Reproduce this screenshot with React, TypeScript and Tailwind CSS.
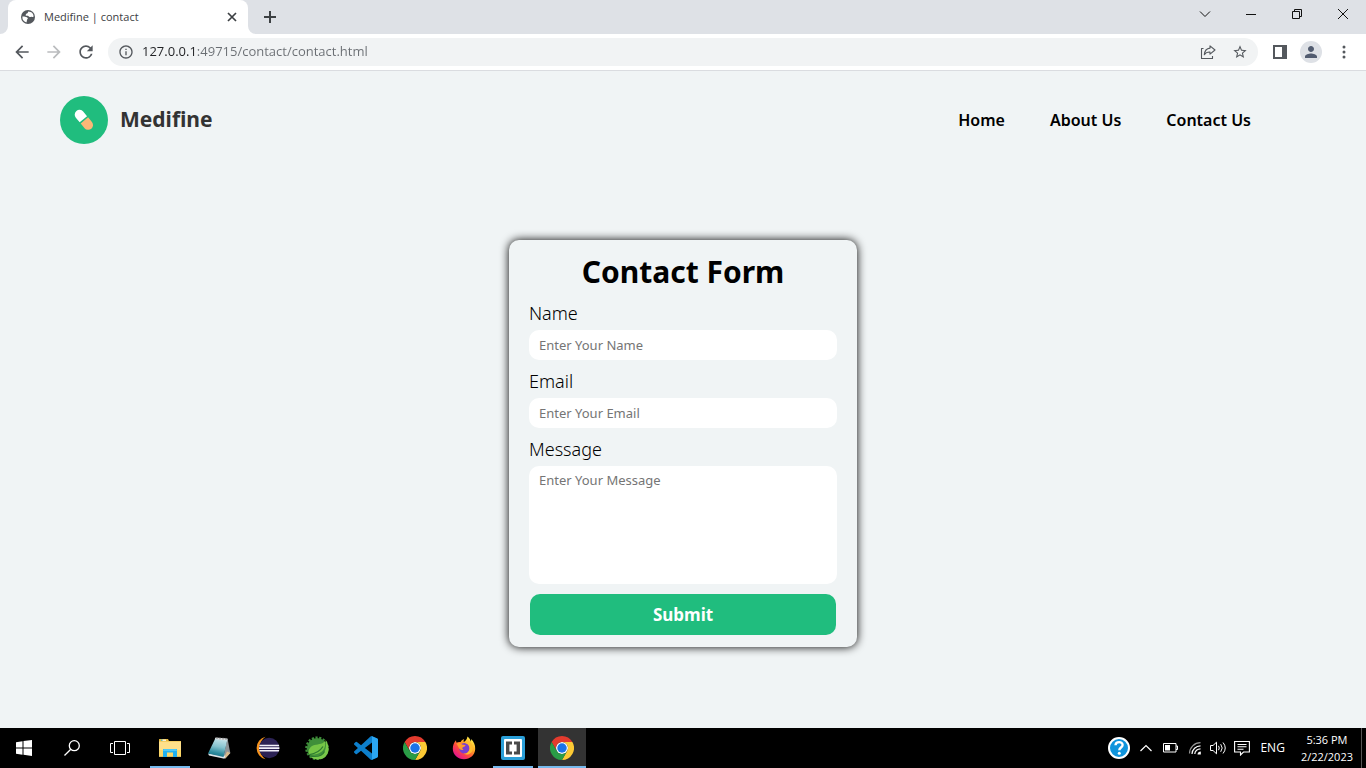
import React from "react";
import { MdArrowBack, MdArrowForward, MdRefresh, MdInfoOutline, MdStarBorder, MdPerson } from "react-icons/md";

/* ---------- Browser window ---------- */

function GlobeIcon() {
  return (
    <svg width="16" height="16" viewBox="0 0 16 16" aria-hidden="true">
      <circle cx="8" cy="8" r="7" fill="#54585d" />
      <path
        d="M8.300 2.500c-.6 1-.3 1.700-1.500 2-.9.3-.6 1.200-1.400 1.500.2 1 1.400.7 2.300.7 1.200.1 1 1.200 2 1.400.8 0 1.500-.7 2.300-.2.700.3 1.300 0 1.700-.3A5.600 5.600 0 0 0 8.300 2.500z"
        fill="#fff"
      />
      <path
        d="M2.400 7.600c1 0 2.600.2 3.600.3 1.500.2 1.900 1 1.800 1.700-.1.600-.8.800-.8 1.500 0 .9-.3 1.700-.6 2.300A5.600 5.600 0 0 1 2.400 7.600z"
        fill="#fff"
      />
    </svg>
  );
}

function WindowButton({ label, children }: { label: string; children: React.ReactNode }) {
  return (
    <button type="button" aria-label={label} className="flex h-7 w-[46px] items-center justify-center">
      <svg width="12" height="12" viewBox="0 0 12 12" fill="none" stroke="#111" strokeWidth="1" aria-hidden="true">
        {children}
      </svg>
    </button>
  );
}

function TabStrip() {
  return (
    <div className="flex h-[34px] items-start bg-[#dee1e6]">
      <div className="flex h-[34px] items-end">
        <svg width="8" height="8" viewBox="0 0 8 8" aria-hidden="true">
          <path d="M8 0v8H0a8 8 0 0 0 8-8z" fill="#fff" />
        </svg>
        <div className="flex h-full w-60 items-center rounded-t-lg bg-white pr-2 pl-3">
          <GlobeIcon />
          <span className="ml-2 flex-1 text-[11px] text-[#3c4043]">Medifine | contact</span>
          <button type="button" aria-label="Close tab" className="flex size-4 items-center justify-center">
            <svg width="10" height="10" viewBox="0 0 10 10" stroke="#3c4043" strokeWidth="1.700" aria-hidden="true">
              <path d="M1 1l8 8M9 1l-8 8" />
            </svg>
          </button>
        </div>
        <svg width="8" height="8" viewBox="0 0 8 8" aria-hidden="true">
          <path d="M0 0v8h8a8 8 0 0 1-8-8z" fill="#fff" />
        </svg>
      </div>
      <button type="button" aria-label="New tab" className="flex h-[34px] w-7 items-center justify-center">
        <svg width="12" height="12" viewBox="0 0 12 12" stroke="#3c4043" strokeWidth="2" aria-hidden="true">
          <path d="M6 0v12M0 6h12" />
        </svg>
      </button>
      <div className="ml-auto flex">
        <WindowButton label="Search tabs">
          <path d="M1 3.500l5 5 5-5" />
        </WindowButton>
        <WindowButton label="Minimize">
          <path d="M1 6.500h10" />
        </WindowButton>
        <WindowButton label="Restore">
          <path d="M1.500 3.500h7v7h-7zM3.500 3.500v-2h7v7h-2" />
        </WindowButton>
        <WindowButton label="Close">
          <path d="M1 1l10 10M11 1L1 11" />
        </WindowButton>
      </div>
    </div>
  );
}

function Toolbar() {
  return (
    <div className="flex h-[37px] items-center border-b border-[#dadce0] bg-white pr-3 pl-3">
      <div className="flex gap-3">
        <button type="button" aria-label="Back" className="size-5 text-[#54585d]">
          <MdArrowBack className="size-5" />
        </button>
        <button type="button" aria-label="Forward" className="size-5 text-[#babcbe]">
          <MdArrowForward className="size-5" />
        </button>
        <button type="button" aria-label="Reload" className="size-5 text-[#54585d]">
          <MdRefresh className="size-5" />
        </button>
      </div>
      <div className="ml-3 flex h-7 flex-1 items-center rounded-full bg-[#f1f3f4] pr-2.5 pl-2.5">
        <MdInfoOutline className="size-4 text-[#54585d]" aria-hidden="true" />
        <input
          aria-label="Address"
          defaultValue="127.0.0.1:49715/contact/contact.html"
          className="ml-2 flex-1 bg-[linear-gradient(to_right,#202124_55px,#6a6e73_55px)] bg-clip-text text-[13px] text-transparent outline-none"
        />
        <div className="flex gap-4">
          <button type="button" aria-label="Share" className="size-4">
            <svg
              width="16"
              height="16"
              viewBox="0 0 16 16"
              fill="none"
              stroke="#54585d"
              strokeWidth="1.100"
              strokeLinejoin="round"
              aria-hidden="true"
            >
              <path d="M3.500 4.500H1.500v10h11v-2.500" />
              <path d="M10 1.800l5 4.200-5 4.200V8C7.500 7.900 5.600 8.700 4.300 10.700 4.600 7.200 6.600 4.500 10 4.100z" />
            </svg>
          </button>
          <button type="button" aria-label="Bookmark" className="size-4 text-[#54585d]">
            <MdStarBorder className="size-4" />
          </button>
        </div>
      </div>
      <div className="ml-3.5 flex items-center gap-3">
        <button type="button" aria-label="Side panel" className="flex size-4 items-center justify-center">
          <svg width="14" height="14" viewBox="0 0 14 14" aria-hidden="true">
            <path d="M0 0h14v14H0z" fill="#54585d" />
            <path d="M2 2h7v10H2z" fill="#fff" />
          </svg>
        </button>
        <button
          type="button"
          aria-label="Profile"
          className="flex size-[22px] items-center justify-center rounded-full bg-[#dee1e6] text-[#525c70]"
        >
          <MdPerson className="size-[18px]" />
        </button>
        <button type="button" aria-label="Menu" className="flex h-4 w-5 items-center justify-center">
          <svg width="4" height="14" viewBox="0 0 4 14" fill="#54585d" aria-hidden="true">
            <circle cx="2" cy="2" r="1.500" />
            <circle cx="2" cy="7" r="1.500" />
            <circle cx="2" cy="12" r="1.500" />
          </svg>
        </button>
      </div>
    </div>
  );
}

/* ---------- Web page ---------- */

function Logo() {
  return (
    <a href="#home" className="flex items-center gap-3">
      <svg width="48" height="48" viewBox="0 0 48 48" aria-hidden="true">
        <circle cx="24" cy="24" r="24" fill="#20bd7e" />
        <g transform="translate(24 24) rotate(-40)">
          <path d="M-4.800-1v-6a4.800 4.800 0 0 1 9.600 0v6z" fill="#fff" />
          <path d="M-4.800 .600v6a4.800 4.800 0 0 0 9.600 0v-6z" fill="#fdb777" />
        </g>
      </svg>
      <span className="text-[21px] font-bold text-[#333]">Medifine</span>
    </a>
  );
}

const links = ["Home", "About Us", "Contact Us"];

function Header() {
  return (
    <header className="flex items-center justify-between pt-[25px] pr-[115px] pl-[60px]">
      <Logo />
      <nav className="flex gap-[45px] text-base font-semibold text-black">
        {links.map((link) => (
          <a key={link} href="#top">
            {link}
          </a>
        ))}
      </nav>
    </header>
  );
}

const labelClass = "mb-1.5 block text-lg leading-[22px] font-light text-black";
const fieldClass =
  "block w-full rounded-[10px] bg-white px-2.5 text-[13px] text-black outline-none placeholder:text-[#757575]";

function ContactForm() {
  return (
    <form
      onSubmit={(e) => e.preventDefault()}
      className="mx-auto mt-24 w-full max-w-[348px] rounded-[10px] bg-[#f0f4f5] px-5 pt-3 pb-3 shadow-[0_0_10px_#000]"
    >
      <h1 className="mb-2.5 text-center text-3xl leading-10 font-bold text-black">Contact Form</h1>
      <label htmlFor="name" className={labelClass}>
        Name
      </label>
      <input id="name" type="text" placeholder="Enter Your Name" className={`${fieldClass} mb-2.5 h-[30px]`} />
      <label htmlFor="email" className={labelClass}>
        Email
      </label>
      <input id="email" type="email" placeholder="Enter Your Email" className={`${fieldClass} mb-2.5 h-[30px]`} />
      <label htmlFor="message" className={labelClass}>
        Message
      </label>
      <textarea
        id="message"
        placeholder="Enter Your Message"
        className={`${fieldClass} mb-2.5 h-[118px] resize-none py-[5px] leading-[18px]`}
      />
      <div className="px-px">
        <button type="submit" className="h-[41px] w-full rounded-[10px] bg-[#20bd7e] text-[17px] font-bold text-white">
          Submit
        </button>
      </div>
    </form>
  );
}

/* ---------- Taskbar icons ---------- */

function ChromeIcon() {
  return (
    <svg width="24" height="24" viewBox="0 0 48 48" aria-hidden="true">
      <circle cx="24" cy="24" r="12" fill="#fff" />
      <path
        d="M24,12H44.7812a23.9939,23.9939,0,0,0-41.5639.0029L13.6079,30l.0093-.0024A11.9852,11.9852,0,0,1,24,12Z"
        fill="#e33b2e"
      />
      <path
        d="M34.3913,30.0029,24.0007,48A23.994,23.994,0,0,0,44.78,12.0031H23.9989l-.0025.0093A11.985,11.985,0,0,1,34.3913,30.0029Z"
        fill="#fcc934"
      />
      <path
        d="M13.6086,30.0031,3.218,12.006A23.994,23.994,0,0,0,24.0025,48L34.3931,30.0029l-.0067-.0068a11.9852,11.9852,0,0,1-20.7778.007Z"
        fill="#2a9c46"
      />
      <circle cx="24" cy="24" r="9.500" fill="#1a73e8" />
    </svg>
  );
}

function ExplorerIcon() {
  return (
    <svg width="22" height="20" viewBox="0 0 22 20" aria-hidden="true">
      <path d="M0 1.500Q0 1 .500 1H9l1 2h12v15.500H0z" fill="#e9b93b" />
      <path d="M2 1.600h5v1.200H2z" fill="#fff" />
      <path d="M2 1.600h1.500v1.200H2z" fill="#35a9a0" />
      <path d="M0 3.500h22v15H0z" fill="#ffe08a" />
      <path d="M0 12h22v6.500H0z" fill="#fbd666" />
      <path d="M4 11h14v8h-4v-4.500H8V19H4z" fill="#1fb0ee" />
      <path d="M4.500 11h13l.5 2H4z" fill="#4cc8f6" />
    </svg>
  );
}

function NotepadIcon() {
  return (
    <svg width="24" height="24" viewBox="0 0 24 24" aria-hidden="true">
      <defs>
        <linearGradient id="pad" x1=".6" y1="0" x2=".4" y2="1">
          <stop offset="0" stopColor="#c9e6ec" />
          <stop offset=".45" stopColor="#86c3cf" />
          <stop offset=".8" stopColor="#2b8a9c" />
          <stop offset="1" stopColor="#1c6e84" />
        </linearGradient>
      </defs>
      <path d="M20.500 2.500L23.300 17l-5 5.500-2-2z" fill="#8e9498" />
      <path d="M17 21.500l3-6 3.300 1.500-5 5.500z" fill="#d9b98a" />
      <path d="M1 17.500l1 2 15.500 3.200 1-3z" fill="#dfe5e8" />
      <path d="M8.500 2L20.500 3 16.500 21 1 17.500z" fill="url(#pad)" />
      <path d="M8.500 1.500L20.500 2.600l-.4 1.800L7.800 3.200z" fill="#d9dcde" />
      <path d="M10 1v2M13 1.300v2M16 1.600v2M19 1.900v2" stroke="#777" strokeWidth=".8" />
    </svg>
  );
}

function EclipseIcon() {
  return (
    <svg width="24" height="24" viewBox="0 0 24 24" aria-hidden="true">
      <path d="M9.500 .8A11.500 11.500 0 0 0 9.500 23.200 13.500 13.500 0 0 1 9.500 .8z" fill="#f7941e" />
      <circle cx="13.200" cy="12" r="10.200" fill="#2c2255" />
      <path d="M3.600 8.700h19.300l.4 1.500H3.200zM3 11.200h20.400v1.700H3zM3.200 14h20.100l-.5 1.500H3.700z" fill="#f2f0fa" />
    </svg>
  );
}

function SpringIcon() {
  return (
    <svg width="24" height="24" viewBox="0 0 24 24" aria-hidden="true">
      <circle cx="12" cy="12.300" r="10.200" fill="#3f8f3a" />
      <circle cx="12" cy="12.300" r="10.800" fill="none" stroke="#3f8f3a" strokeWidth="2" strokeDasharray="2.200 1.570" />
      <path d="M20.500 3.500c4.500 7 4 14.500-1 18-5 3.500-12.500 2-15-2 4 .5 11 .8 14-2.500 2.600-3 3-8.500 2-13.500z" fill="#79c94a" />
      <path d="M20 5C17 9 12 7.800 8 9.600c-4 1.900-5.300 6-3.600 8.900 7 .5 13-1.500 15-6.500 1-2.500 1-5 .6-7z" fill="#75c546" />
      <path d="M4.500 18.700c6-1 10.500-3.500 13.500-8.200M5 20c6 1 12 .5 14.500-4.500" fill="none" stroke="#2d7b31" strokeWidth="1.300" />
    </svg>
  );
}

function VsCodeIcon() {
  return (
    <svg width="24" height="24" viewBox="0 0 24 24" aria-hidden="true">
      <path
        d="M23.150 2.587L18.210.210a1.494 1.494 0 0 0-1.705.290l-9.460 8.630-4.120-3.128a.999.999 0 0 0-1.276.057L.327 7.261A1 1 0 0 0 .326 8.740L3.899 12 .326 15.260a1 1 0 0 0 .001 1.479L1.650 17.940a.999.999 0 0 0 1.276.057l4.120-3.128 9.460 8.630a1.492 1.492 0 0 0 1.704.290l4.942-2.377A1.500 1.500 0 0 0 24 20.060V3.939a1.500 1.500 0 0 0-.850-1.352zm-5.146 14.861L10.826 12l7.178-5.448v10.896z"
        fill="#0d7fcc"
      />
      <path d="M18 .200l5.200 2.400q.8.500.8 1.300v16.200q0 .8-.8 1.300L18 23.800z" fill="#2ba6f2" />
    </svg>
  );
}

function FirefoxIcon() {
  return (
    <svg width="24" height="24" viewBox="0 0 24 24" aria-hidden="true">
      <defs>
        <linearGradient id="fox" x1=".85" y1=".1" x2=".2" y2=".9">
          <stop offset="0" stopColor="#fff04a" />
          <stop offset=".35" stopColor="#ffa524" />
          <stop offset=".65" stopColor="#ff4b3c" />
          <stop offset="1" stopColor="#e3158c" />
        </linearGradient>
      </defs>
      <path
        d="M15.500 .5c2 1.500 3 3.500 3.200 5 .5-.5.500-1.500.300-2.500 2.800 2.500 4.400 6 4.200 10C22.900 19 18 23.300 12 23.300S.8 18.800.8 12.800C.8 9 2 6.500 4 4.300c0 1 .2 1.800.6 2.500C5.500 6 7 5.700 8.600 6c1-1.500 2.300-2.500 3.600-2.900-.6 1-.8 2-.5 3 1.800-.8 3.300-2.800 3.800-5.600z"
        fill="url(#fox)"
      />
      <circle cx="12.300" cy="12.300" r="5.200" fill="#7a3fd0" />
      <path d="M4.600 7.500c2-1 4.500-.5 5.400 1 1 .3 2.500.2 3.600.8-.5 1.500-2.800 1.600-3.200 2.400-.4 1 .4 1.900 1.300 2-2 .8-4.500-.2-5.200-2.400z" fill="#ff9a2b" />
      <path d="M13 7c3 .5 5 3 4.500 6-.4 3-3 5-6 4.800 5 2.500 9.800-1.300 9.300-6.300C20.300 8 17.500 5 15.500 4c.5 2-.7 2.700-2.500 3z" fill="#ffbd2f" />
    </svg>
  );
}

function BracketsIcon() {
  return (
    <svg width="24" height="24" viewBox="0 0 24 24" aria-hidden="true">
      <rect width="24" height="24" rx="2" fill="#2a9fd8" />
      <rect x="3" y="3" width="18" height="18" rx="1" fill="#fff" />
      <path d="M11 5.500H5v13h6v-3H8.400v-7H11zM13 5.500h6v13h-6v-3h2.600v-7H13z" fill="#4a4a4a" />
    </svg>
  );
}

const apps = [
  { name: "File Explorer", icon: <ExplorerIcon />, state: "running" },
  { name: "Notepad", icon: <NotepadIcon />, state: "idle" },
  { name: "Eclipse", icon: <EclipseIcon />, state: "idle" },
  { name: "Spring Tool Suite", icon: <SpringIcon />, state: "idle" },
  { name: "Visual Studio Code", icon: <VsCodeIcon />, state: "idle" },
  { name: "Google Chrome", icon: <ChromeIcon />, state: "idle" },
  { name: "Firefox", icon: <FirefoxIcon />, state: "idle" },
  { name: "Brackets", icon: <BracketsIcon />, state: "running" },
  { name: "Chrome window", icon: <ChromeIcon />, state: "active" },
];

const appState: Record<string, string> = {
  idle: "w-10 border-transparent",
  running: "w-10 border-[#76b9ed]",
  active: "w-12 border-[#76b9ed] bg-[#333]",
};

function Taskbar() {
  return (
    <footer className="flex h-10 items-stretch bg-black text-xs text-white">
      <button type="button" aria-label="Start" className="flex w-12 items-center justify-center">
        <svg width="16" height="16" viewBox="0 0 16 16" fill="#fff" aria-hidden="true">
          <path d="M0 2.300L6.500 1.300V7.500H0zM7.500 1.100L16 0v7.500H7.500zM0 8.500h6.500v6.200L0 13.800zM7.500 8.500H16V16l-8.500-1.200z" />
        </svg>
      </button>
      <button type="button" aria-label="Search" className="flex w-12 items-center justify-center">
        <svg width="16" height="16" viewBox="0 0 16 16" fill="none" stroke="#fff" strokeWidth="1.300" aria-hidden="true">
          <circle cx="10.300" cy="5.700" r="5" />
          <path d="M6.800 9.200L.5 15.500" />
        </svg>
      </button>
      <button type="button" aria-label="Task view" className="flex w-12 items-center justify-center">
        <svg width="20" height="14" viewBox="0 0 20 14" fill="none" stroke="#fff" strokeWidth="1" aria-hidden="true">
          <path d="M4.500 .500h11v13h-11zM3 2.500H.500v9H3M17 2.500h2.500v9H17" />
        </svg>
      </button>
      <div className="ml-px flex">
        {apps.map((app) => (
          <div key={app.name} className="flex w-[49px] justify-center">
            <button
              type="button"
              aria-label={app.name}
              className={`flex items-center justify-center border-b-2 pt-0.5 ${appState[app.state]}`}
            >
              {app.icon}
            </button>
          </div>
        ))}
      </div>
      <div className="ml-auto flex items-center">
        <div className="flex items-center gap-2">
          <button type="button" aria-label="Help">
            <svg width="24" height="24" viewBox="0 0 24 24" aria-hidden="true">
              <circle cx="12" cy="12" r="10" fill="#0f94dc" stroke="#fff" strokeWidth="2" />
              <path
                d="M8.500 9.200c.2-4.200 7.300-4 7.100-.2-.1 2.400-3.300 2.600-3.300 5.300"
                fill="none"
                stroke="#fff"
                strokeWidth="2.400"
              />
              <circle cx="12.300" cy="17.300" r="1.500" fill="#fff" />
            </svg>
          </button>
          <button type="button" aria-label="Hidden icons">
            <svg width="14" height="10" viewBox="0 0 14 10" fill="none" stroke="#fff" strokeWidth="1.200" aria-hidden="true">
              <path d="M1.500 8L7 2.500 12.500 8" />
            </svg>
          </button>
          <button type="button" aria-label="Battery" className="ml-0.5">
            <svg width="15" height="10" viewBox="0 0 15 10" aria-hidden="true">
              <path d="M.5.500h12.500v8.500H.5zM13 3h1.500v3.500H13" fill="none" stroke="#fff" />
              <path d="M2 2h5v5.500H2z" fill="#fff" />
            </svg>
          </button>
          <button type="button" aria-label="Network" className="ml-0.5">
            <svg width="14" height="14" viewBox="0 0 14 14" fill="none" stroke="#fff" strokeWidth="1.200" aria-hidden="true">
              <path d="M1.500 12.500C1.500 6.500 6.500 1.700 12.500 1.700" stroke="#999" />
              <path d="M4 13C4 8.500 8 4.800 12.500 4.800M6.800 13c0-3 2.700-5.200 5.700-5.200" />
              <path d="M9.500 13.500c0-2 1.500-3 3.300-3v3z" fill="#fff" stroke="none" />
            </svg>
          </button>
          <button type="button" aria-label="Volume">
            <svg width="16" height="14" viewBox="0 0 16 14" fill="none" stroke="#fff" strokeWidth="1" aria-hidden="true">
              <path d="M.5 4.500h2.500L6.500 1.200v11.600L3 9.500H.5zM8.500 4.800q1.500 2.200 0 4.400M10.700 3.200q3 3.800 0 7.600M13 1.500q4.500 5.500 0 11" />
            </svg>
          </button>
          <button type="button" aria-label="Notifications">
            <svg width="16" height="16" viewBox="0 0 16 16" fill="none" stroke="#fff" strokeWidth="1.100" aria-hidden="true">
              <path d="M.6 1.500h14.800v10.500H9.500L6.500 15v-3H.6zM3.500 4.500h9M3.500 6.800h9M3.500 9.200h6" />
            </svg>
          </button>
        </div>
        <span className="ml-2.5">ENG</span>
        <div className="ml-4 text-center text-[11px] leading-[17px]">
          <div>5:36 PM</div>
          <div>2/22/2023</div>
        </div>
        <button type="button" aria-label="Show desktop" className="ml-2 h-10 w-[5px] border-l border-[#555]" />
      </div>
    </footer>
  );
}

export default function App() {
  return (
    <div className="flex min-h-screen flex-col bg-[#f0f4f5] font-['Open_Sans','Noto_Sans',sans-serif]">
      <TabStrip />
      <Toolbar />
      <main className="flex-1 font-['Noto_Sans','Open_Sans',sans-serif]">
        <Header />
        <ContactForm />
      </main>
      <Taskbar />
    </div>
  );
}
